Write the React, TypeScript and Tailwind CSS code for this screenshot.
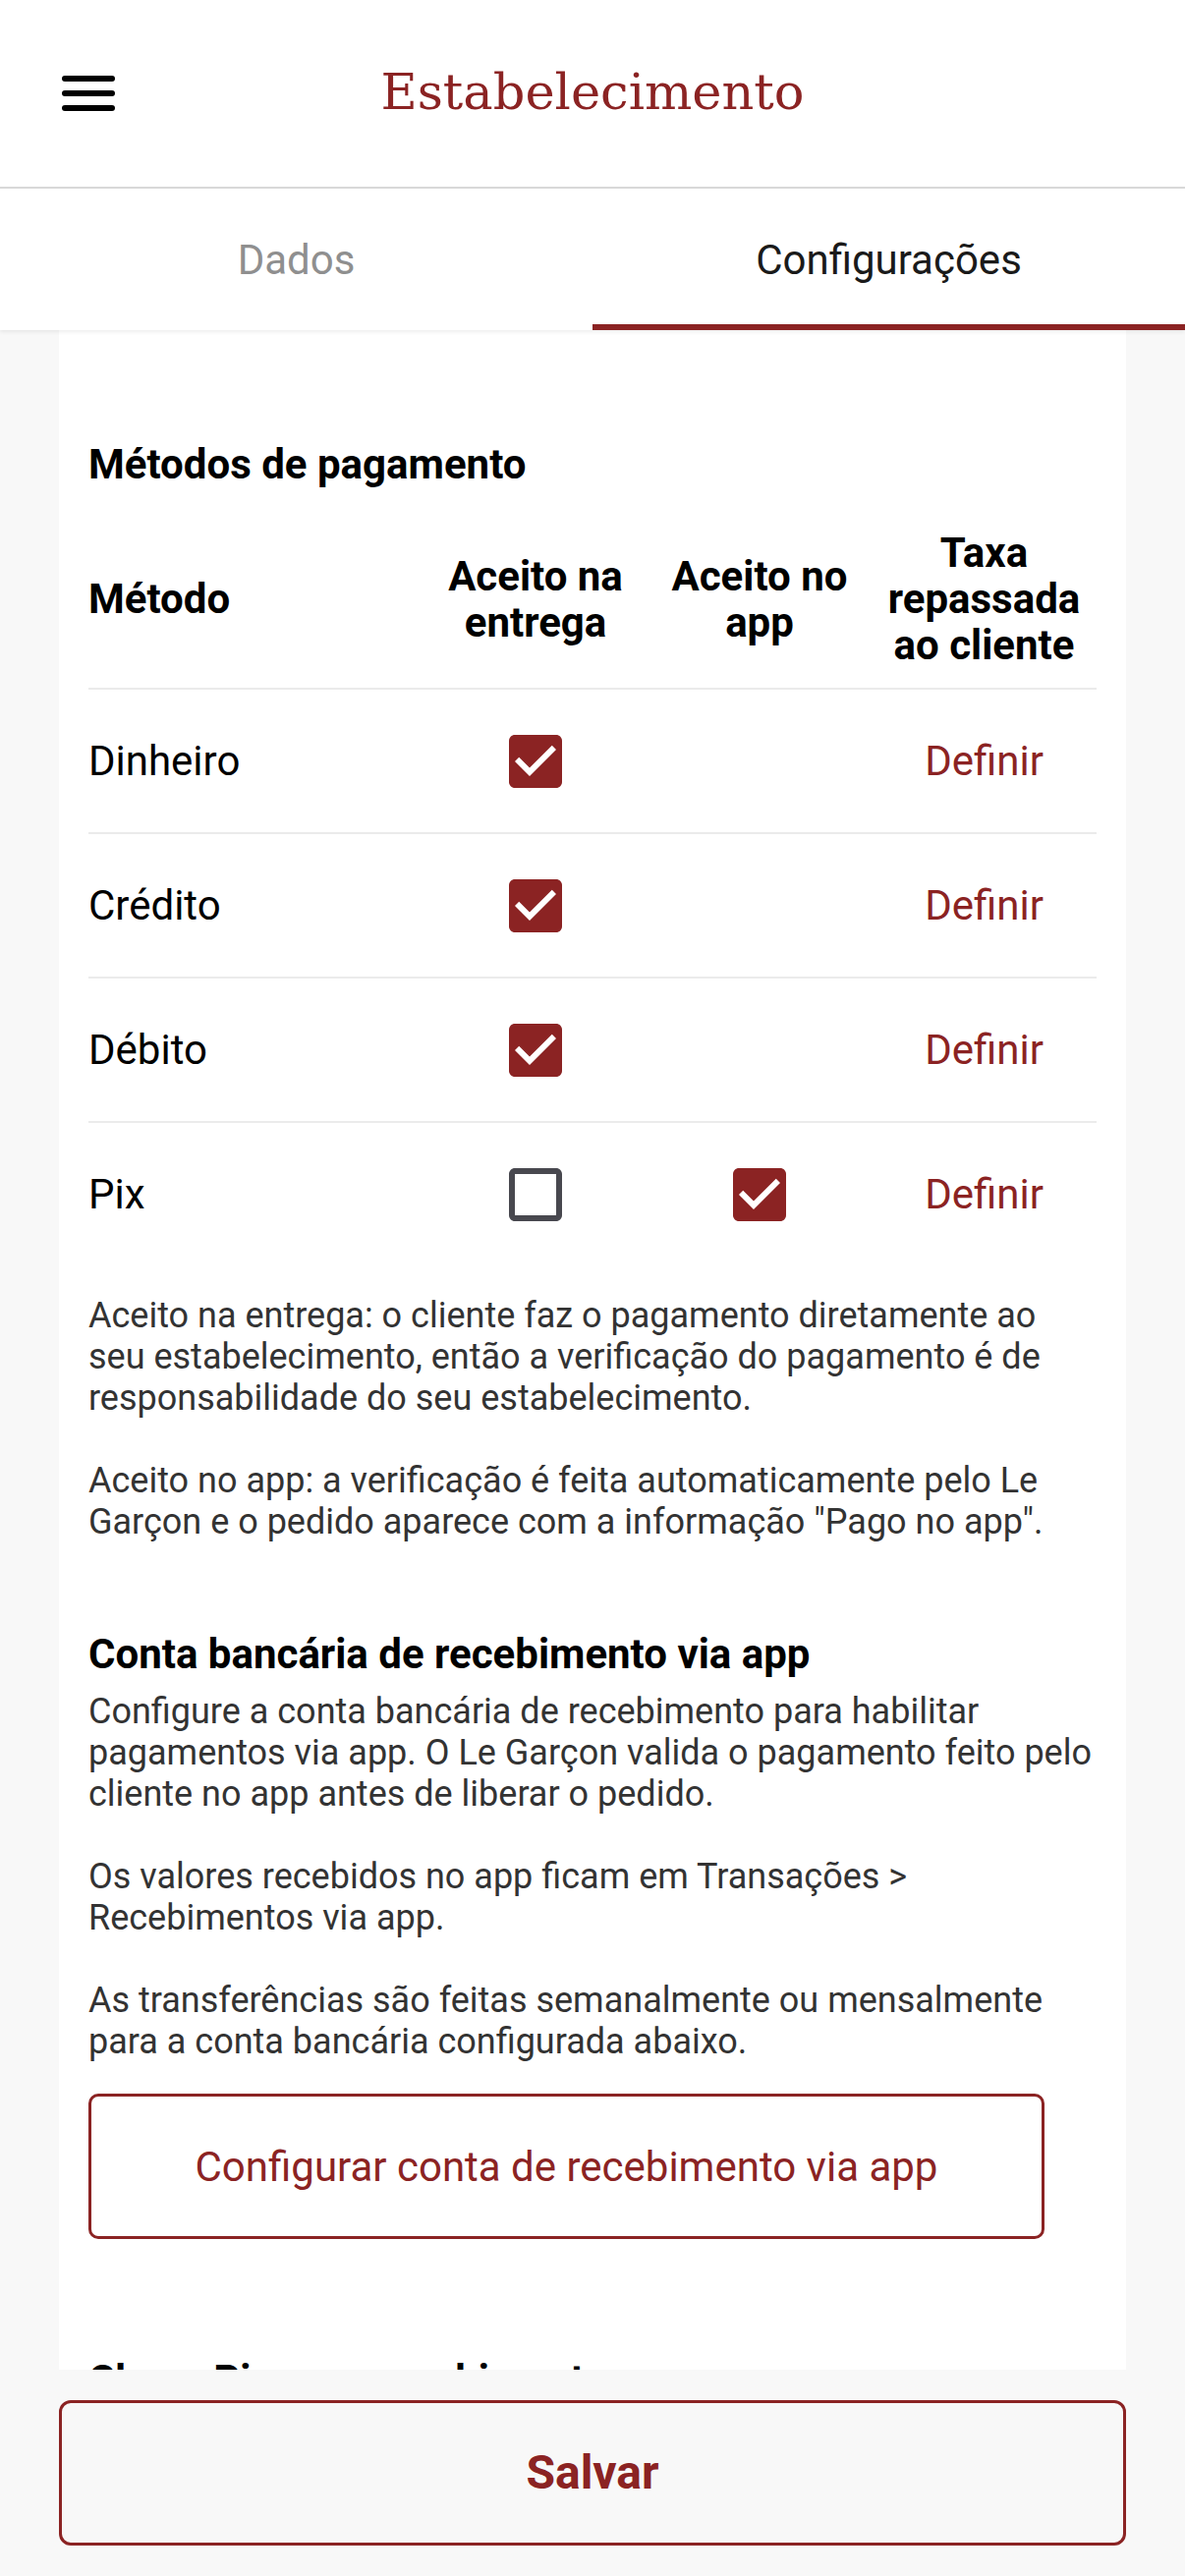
import React from "react";

const RED = "#8B2323";

function CheckBox({ checked }: { checked: boolean }) {
  if (checked) {
    return (
      <svg width="72" height="72" viewBox="0 0 24 24" className="block">
        <path
          fill={RED}
          d="M19 3H5c-1.11 0-2 .9-2 2v14c0 1.1.89 2 2 2h14c1.11 0 2-.9 2-2V5c0-1.1-.89-2-2-2z"
        />
        <path fill="#ffffff" d="M10 17l-5-5 1.41-1.41L10 14.17l7.59-7.59L19 8l-9 9z" />
      </svg>
    );
  }
  return (
    <svg width="72" height="72" viewBox="0 0 24 24" className="block">
      <path
        fill="#48484f"
        d="M19 5v14H5V5h14m0-2H5c-1.1 0-2 .9-2 2v14c0 1.1.9 2 2 2h14c1.1 0 2-.9 2-2V5c0-1.1-.9-2-2-2z"
      />
    </svg>
  );
}

const rows: { name: string; entrega: boolean; app: boolean | null }[] = [
  { name: "Dinheiro", entrega: true, app: null },
  { name: "Crédito", entrega: true, app: null },
  { name: "Débito", entrega: true, app: null },
  { name: "Pix", entrega: false, app: true },
];

export default function App() {
  return (
    <div className="w-[1206px] h-[2622px] flex flex-col bg-[#f8f8f8] overflow-hidden font-['Roboto',sans-serif] text-black">
      {/* Header */}
      <header className="h-[192px] shrink-0 bg-white border-b-2 border-[#d9d9d9] grid grid-cols-[1fr_auto_1fr] items-center">
        <div className="pl-[63px]">
          <div className="w-[54px] h-[36px] flex flex-col justify-between">
            <div className="h-[6px] rounded-full bg-black" />
            <div className="h-[6px] rounded-full bg-black" />
            <div className="h-[6px] rounded-full bg-black" />
          </div>
        </div>
        <h1 className="font-['DejaVu_Serif',serif] text-[51px] leading-none text-[#8B2323] pb-[4px]">
          Estabelecimento
        </h1>
        <div />
      </header>

      {/* Tabs */}
      <nav className="h-[144px] shrink-0 bg-white flex relative z-10 shadow-[0_2px_4px_rgba(0,0,0,0.07)]">
        <div className="flex-1 flex items-center justify-center border-b-[6px] border-transparent pt-[6px] text-[42px] text-[#8f8f8f]">
          Dados
        </div>
        <div className="flex-1 flex items-center justify-center border-b-[6px] border-[#8B2323] pt-[6px] text-[42px] text-[#1a1a1a]">
          Configurações
        </div>
      </nav>

      {/* Scroll content */}
      <main className="flex-1 min-h-0 overflow-hidden px-[60px]">
        <div className="bg-white px-[30px] pt-[113px] pb-[200px]">
          <h2 className="text-[42px] leading-[47px] font-bold">Métodos de pagamento</h2>

          <div className="mt-[23px]">
            <div className="grid grid-cols-[341px_228px_228px_1fr] items-center py-[20px] border-b-2 border-[#ebebeb] text-[42px] leading-[47px] font-bold">
              <div>Método</div>
              <div className="text-center">
                Aceito na
                <br />
                entrega
              </div>
              <div className="text-center">
                Aceito no
                <br />
                app
              </div>
              <div className="text-center">
                Taxa
                <br />
                repassada
                <br />
                ao cliente
              </div>
            </div>

            {rows.map((r, i) => (
              <div
                key={r.name}
                className={
                  i < rows.length - 1
                    ? "grid grid-cols-[341px_228px_228px_1fr] items-center h-[147px] border-b-2 border-[#ebebeb] text-[42px]"
                    : "grid grid-cols-[341px_228px_228px_1fr] items-center h-[145px] text-[42px]"
                }
              >
                <div>{r.name}</div>
                <div className="flex justify-center">
                  <CheckBox checked={r.entrega} />
                </div>
                <div className="flex justify-center">
                  {r.app !== null ? <CheckBox checked={r.app} /> : null}
                </div>
                <div className="text-center text-[#8B2323]">Definir</div>
              </div>
            ))}
          </div>

          <div className="mt-[30px] text-[36px] leading-[42px] text-[#333333]">
            <p>
              Aceito na entrega: o cliente faz o pagamento diretamente ao
              <br />
              seu estabelecimento, então a verificação do pagamento é de
              <br />
              responsabilidade do seu estabelecimento.
            </p>
            <p className="mt-[42px]">
              Aceito no app: a verificação é feita automaticamente pelo Le
              <br />
              Garçon e o pedido aparece com a informação "Pago no app".
            </p>
          </div>

          <h2 className="mt-[90px] text-[42px] leading-[47px] font-bold">
            Conta bancária de recebimento via app
          </h2>
          <div className="mt-[14px] text-[36px] leading-[42px] text-[#333333]">
            <p>
              Configure a conta bancária de recebimento para habilitar
              <br />
              pagamentos via app. O Le Garçon valida o pagamento feito pelo
              <br />
              cliente no app antes de liberar o pedido.
            </p>
            <p className="mt-[42px]">
              Os valores recebidos no app ficam em Transações &gt;
              <br />
              Recebimentos via app.
            </p>
            <p className="mt-[42px]">
              As transferências são feitas semanalmente ou mensalmente
              <br />
              para a conta bancária configurada abaixo.
            </p>
          </div>

          <button className="mt-[32px] w-[973px] h-[148px] border-[3px] border-[#8B2323] rounded-[10px] bg-white text-[42px] text-[#8B2323] flex items-center justify-center">
            Configurar conta de recebimento via app
          </button>

          <h2 className="mt-[120px] text-[42px] leading-[47px] font-bold">
            Chave Pix para recebimento
          </h2>
        </div>
      </main>

      {/* Footer */}
      <footer className="h-[210px] shrink-0 bg-[#f8f8f8] px-[60px] py-[31px]">
        <button className="w-full h-[148px] border-[3px] border-[#8B2323] rounded-[12px] bg-transparent text-[48px] font-bold text-[#8B2323] flex items-center justify-center">
          Salvar
        </button>
      </footer>
    </div>
  );
}
